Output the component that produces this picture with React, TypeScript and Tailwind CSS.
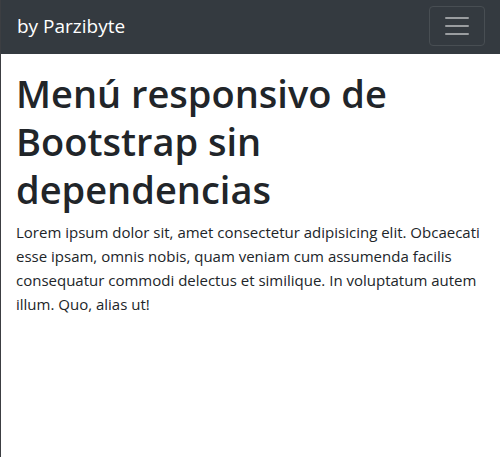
export default function App() {
  return (
    <div className="min-h-screen border-l border-[#3c3e42] bg-white font-['Open_Sans','Noto_Sans',sans-serif] text-[#212529]">
      <nav className="flex items-center justify-between bg-[#343a40] pt-1.5 pr-[15px] pb-2 pl-4">
        <a href="#" className="text-[19px] leading-[30px] text-white">
          by Parzibyte
        </a>
        <button
          type="button"
          aria-label="Menú"
          className="flex h-10 w-14 items-center justify-center rounded-[4px] border border-[#484e53]"
        >
          <svg viewBox="0 0 30 30" className="size-[30px]" fill="none">
            <path
              d="M4 7h22M4 15h22M4 23h22"
              stroke="rgba(255,255,255,0.5)"
              strokeWidth="2"
              strokeLinecap="round"
              strokeMiterlimit="10"
            />
          </svg>
        </button>
      </nav>

      <main className="px-[15px] pt-[15px]">
        <h1 className="mb-[7px] text-[38px] leading-[48px] font-semibold">
          Menú responsivo de Bootstrap sin dependencias
        </h1>
        <p className="text-[15px] leading-6">
          Lorem ipsum dolor sit, amet consectetur adipisicing elit. Obcaecati esse ipsam, omnis nobis, quam veniam cum
          assumenda facilis consequatur commodi delectus et similique. In voluptatum autem illum. Quo, alias ut!
        </p>
      </main>
    </div>
  );
}
